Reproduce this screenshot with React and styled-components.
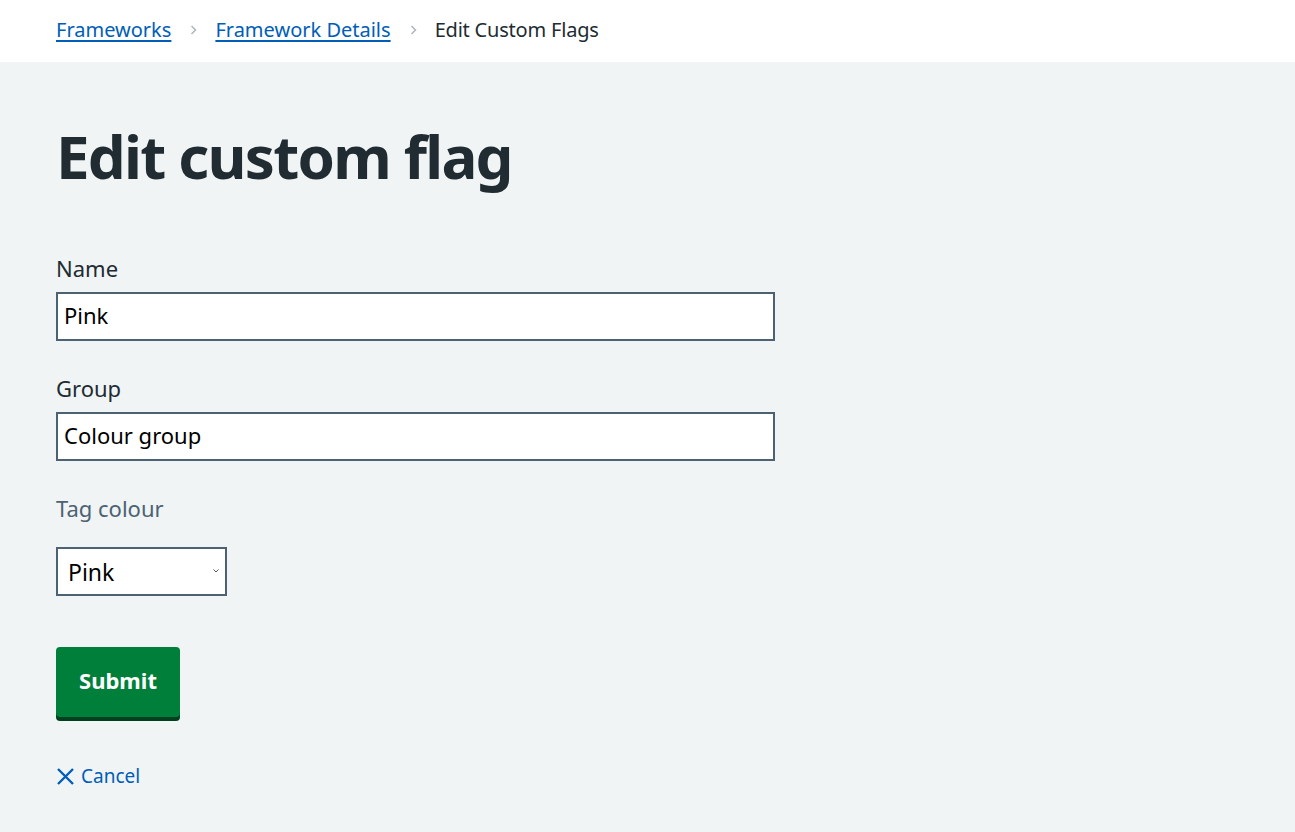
import React from 'react'
import styled, { createGlobalStyle } from 'styled-components'

const Global = createGlobalStyle`
  html, body {
    margin: 0;
    padding: 0;
    background: #f0f4f5;
    font-family: "Noto Sans", "Open Sans", sans-serif;
    color: #212b32;
  }
`

function Chevron() {
  return (
    <ChevronIcon viewBox="0 0 7 10">
      <path d="M1.5 1l4 4-4 4" fill="none" stroke="#aeb7bd" strokeWidth="1.5" />
    </ChevronIcon>
  )
}

function App() {
  return (
    <>
      <Global />
      <Header>
        <Crumbs>
          <CrumbLink href="#">Frameworks</CrumbLink>
          <Chevron />
          <CrumbLink href="#">Framework Details</CrumbLink>
          <Chevron />
          <Current>Edit Custom Flags</Current>
        </Crumbs>
      </Header>
      <Main>
        <Title>Edit custom flag</Title>
        <Field>
          <Label>Name</Label>
          <Input defaultValue="Pink" />
        </Field>
        <Field>
          <Label>Group</Label>
          <Input defaultValue="Colour group" />
        </Field>
        <Field>
          <Label muted>Tag colour</Label>
          <SelectWrap>
            <Select defaultValue="Pink">
              <option>Pink</option>
              <option>Blue</option>
              <option>Green</option>
            </Select>
            <Caret viewBox="0 0 6 4">
              <path d="M0.5 0.5l2.5 2.5 2.5-2.5" fill="none" stroke="#555" strokeWidth="1" />
            </Caret>
          </SelectWrap>
        </Field>
        <Button>Submit</Button>
        <Cancel href="#">
          <svg width="19" height="19" viewBox="0 0 19 19">
            <path d="M2 2l15 15M17 2L2 17" stroke="#005eb8" strokeWidth="2.4" fill="none" />
          </svg>
          Cancel
        </Cancel>
      </Main>
    </>
  )
}

export default App

const Header = styled.header`
  background: #fff;
  height: 62px;
  display: flex;
  align-items: center;
  padding: 0 56px;
`
const Crumbs = styled.nav`
  display: flex;
  align-items: center;
  font-size: 20px;
  padding-bottom: 4px;
`
const CrumbLink = styled.a`
  color: #005eb8;
  text-decoration: underline;
  text-underline-offset: 3px;
`
const ChevronIcon = styled.svg`
  width: 7px;
  height: 10px;
  margin: 2px 18px 0 19px;
`
const Current = styled.span`
  color: #212b32;
  letter-spacing: -0.2px;
`
const Main = styled.main`
  padding: 58px 56px 40px;
  display: flex;
  flex-direction: column;
  align-items: flex-start;
`
const Title = styled.h1`
  font-size: 60px;
  font-weight: 700;
  margin: 0 0 60px;
  line-height: 1.2;
  letter-spacing: -1.75px;
`
const Field = styled.div`
  display: flex;
  flex-direction: column;
  align-items: flex-start;
  margin-bottom: 31px;
`
const Label = styled.label`
  font-size: 22px;
  line-height: 32px;
  margin-bottom: 8px;
  color: ${p => (p.muted ? '#4c6272' : '#212b32')};
  ${p => p.muted && 'margin-bottom: 23px;'}
`
const Input = styled.input`
  box-sizing: border-box;
  width: 719px;
  height: 49px;
  border: 2px solid #4c6272;
  background: #fff;
  font-family: "Noto Sans", sans-serif;
  font-size: 22px;
  padding: 0 6px 3px;
  color: #000;
  outline: none;
`
const SelectWrap = styled.div`
  position: relative;
`
const Select = styled.select`
  appearance: none;
  box-sizing: border-box;
  width: 171px;
  height: 49px;
  border: 2px solid #4c6272;
  background: #fff;
  font-family: "Noto Sans", sans-serif;
  font-size: 23px;
  padding: 0 10px;
  color: #000;
  border-radius: 0;
`
const Caret = styled.svg`
  position: absolute;
  right: 8px;
  top: 22px;
  width: 6px;
  height: 4px;
  pointer-events: none;
`
const Button = styled.button`
  margin-top: 20px;
  background: #007f3b;
  color: #fff;
  border: none;
  border-radius: 4px;
  box-shadow: 0 4px 0 #00401e;
  font-family: "Noto Sans", sans-serif;
  font-weight: 700;
  font-size: 22px;
  width: 124px;
  height: 70px;
  padding-bottom: 6px;
  cursor: pointer;
`
const Cancel = styled.a`
  margin-top: 46px;
  display: flex;
  align-items: center;
  gap: 6px;
  color: #005eb8;
  text-decoration: none;
  font-size: 19px;
`
